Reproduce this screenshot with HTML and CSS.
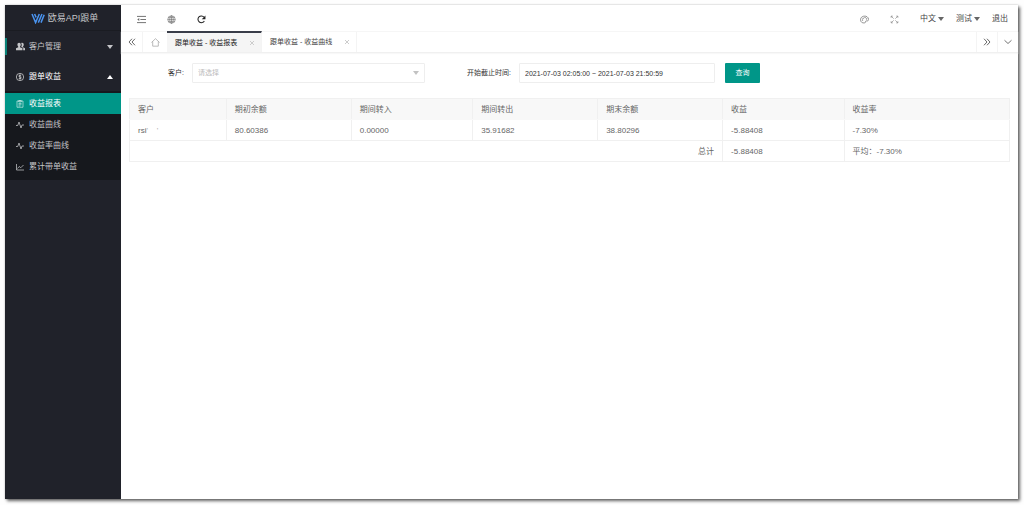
FILE: index.html
```html
<!DOCTYPE html>
<html lang="zh-CN">
<head>
<meta charset="utf-8">
<title>欧易API跟单</title>
<link rel="stylesheet" href="styles.css">
</head>
<body>
<div class="app">
  <aside class="sidebar">
    <div class="brand">
      <svg class="brand-logo" viewBox="0 0 14 11"><path d="M1 1l3.600 8.600L8.300 1M3.600 1l1.500 3.400M7.300 9.600L11 1M10 9.600L13.200 1.800" fill="none" stroke="#4a94f0" stroke-width="1.500"/></svg>
      <span>欧易API跟单</span>
    </div>
    <nav class="menu">
      <a class="menu-item marked" href="#">
        <svg class="icon icon-wide" viewBox="0 0 16 16"><path d="M5.500 1.500c2 0 3 1.500 3 3.500 0 1.500-.6 2.700-1.400 3.300v1.200l4.400 1.500V14.500H0V11l4-1.500V8.300C3.100 7.700 2.500 6.500 2.500 5c0-2 1-3.500 3-3.500z" fill="currentColor"/><path d="M11 1.500c1.800 0 2.800 1.500 2.800 3.500 0 1.400-.6 2.500-1.300 3.200v1.200L16 11v3.500h-3.200V10.300L9.500 9V8c.8-1 1-4-.3-5.800.4-.4 1-.7 1.800-.7z" fill="currentColor"/></svg>
        <span>客户管理</span><i class="caret"></i>
      </a>
      <a class="menu-item open" href="#">
        <svg class="icon" viewBox="0 0 16 16" fill="none" stroke="currentColor" stroke-width="1.200"><circle cx="8" cy="8" r="7.300"/><path d="M10.500 5.700C10 4.800 9 4.500 8 4.500c-1.500 0-2.500.7-2.500 1.700C5.500 8.500 10.600 7.300 10.600 9.800c0 1.100-1.100 1.800-2.600 1.800-1.300 0-2.300-.5-2.700-1.500M8 2.800v10.400"/></svg>
        <span>跟单收益</span><i class="caret up"></i>
      </a>
      <div class="submenu">
        <a class="sub-item active" href="#">
          <svg class="icon" viewBox="0 0 16 16" fill="none" stroke="currentColor" stroke-width="1.100"><path d="M2 2h12v12.500H2zM5.500 1v3h5V1zM5 7h6M5 9.500h6M5 12h4"/></svg>
          <span>收益报表</span></a>
        <a class="sub-item" href="#">
          <svg class="icon" viewBox="0 0 16 16" fill="none" stroke="currentColor" stroke-width="1.500"><path d="M0 9h3.500L6 2l4 12 2-6h4"/></svg>
          <span>收益曲线</span></a>
        <a class="sub-item" href="#">
          <svg class="icon" viewBox="0 0 16 16" fill="none" stroke="currentColor" stroke-width="1.500"><path d="M0 9h3.500L6 2l4 12 2-6h4"/></svg>
          <span>收益率曲线</span></a>
        <a class="sub-item" href="#">
          <svg class="icon" viewBox="0 0 16 16" fill="none" stroke="currentColor" stroke-width="1.500"><path d="M1 2v12h15M3 11l3.500-4 3 2.500L15 4"/></svg>
          <span>累计带单收益</span></a>
      </div>
    </nav>
  </aside>

  <main class="main">
    <header class="topbar">
      <div class="tools">
        <button class="tool" aria-label="折叠菜单"><svg class="icon" viewBox="0 0 16 16" fill="none" stroke="currentColor" stroke-width="1.600"><path d="M0 2.500h16M6 8h10M0 13.500h16"/><path d="M4 5.500v5L.5 8z" fill="currentColor" stroke="none"/></svg></button>
        <button class="tool" aria-label="网站"><svg class="icon" viewBox="0 0 16 16" fill="none" stroke="currentColor" stroke-width="1"><circle cx="8" cy="8" r="6.700"/><ellipse cx="8" cy="8" rx="3.200" ry="6.700"/><path d="M8 1.300v13.400M1.300 8h13.400M2.300 4.700h11.400M2.300 11.300h11.400"/></svg></button>
        <button class="tool dark" aria-label="刷新"><svg class="icon" viewBox="0 0 16 16"><path d="M13 10.500A6 6 0 1 1 12.500 4" fill="none" stroke="currentColor" stroke-width="1.900"/><path d="M15 1v6.500H8.500z" fill="currentColor"/></svg></button>
      </div>
      <div class="account">
        <button class="tool" aria-label="主题"><svg class="icon" viewBox="0 0 16 16" fill="none" stroke="currentColor" stroke-width="1.200"><path d="M3 13C-.5 10 .5 3.500 6 2.200 11 1 15.500 4 15.300 8c-.1 2.200-1.800 2.800-3.300 2.500-1.600-.3-2.300.5-2 1.500.6 2.200-4 3-7 1z"/><circle cx="4.500" cy="9" r=".6"/><circle cx="5.500" cy="5.700" r=".6"/><circle cx="9" cy="4.700" r=".6"/><circle cx="12" cy="7" r=".6"/></svg></button>
        <button class="tool light" aria-label="全屏"><svg class="icon" viewBox="0 0 16 16" fill="none" stroke="currentColor" stroke-width="1.200"><path d="M2 5V2h3M11 2h3v3M14 11v3h-3M5 14H2v-3M2 2l4.500 4.500M14 2L9.500 6.500M14 14L9.500 9.500M2 14l4.500-4.500"/></svg></button>
        <button class="drop">中文<i class="caret"></i></button>
        <button class="drop">测试<i class="caret"></i></button>
        <a class="logout" href="#">退出</a>
      </div>
    </header>

    <div class="tabs">
      <button class="tab-nav first" aria-label="向左"><svg class="icon" viewBox="0 0 16 16" fill="none" stroke="currentColor" stroke-width="1.600"><path d="M8 1.500L2 8l6 6.500M14 1.500L8 8l6 6.500"/></svg></button>
      <button class="tab-nav home" aria-label="首页"><svg class="icon" viewBox="0 0 16 16" fill="none" stroke="currentColor" stroke-width="1.200"><path d="M.8 8L8 1.200 15.200 8M3 6.500V14.500h10V6.500"/></svg></button>
      <div class="tab current"><a href="#">跟单收益 - 收益报表</a><button class="close" aria-label="关闭"><svg viewBox="0 0 6 6"><path d="M1 1l4 4M5 1L1 5" fill="none" stroke="currentColor" stroke-width="1"/></svg></button></div>
      <div class="tab"><a href="#">跟单收益 - 收益曲线</a><button class="close" aria-label="关闭"><svg viewBox="0 0 6 6"><path d="M1 1l4 4M5 1L1 5" fill="none" stroke="currentColor" stroke-width="1"/></svg></button></div>
      <div class="tab-end">
        <button class="tab-nav" aria-label="向右"><svg class="icon" viewBox="0 0 16 16" fill="none" stroke="currentColor" stroke-width="1.600"><path d="M2 1.500L8 8l-6 6.500M8 1.500L14 8l-6 6.500"/></svg></button>
        <button class="tab-nav" aria-label="更多"><svg class="icon" viewBox="0 0 16 16" fill="none" stroke="currentColor" stroke-width="1.500"><path d="M1 4.500l7 6.500 7-6.500"/></svg></button>
      </div>
    </div>

    <section class="content">
      <form class="filters">
        <label class="label-client" for="client">客户:</label>
        <div class="select-wrap">
          <select id="client" class="field"><option>请选择</option></select>
          <i class="caret"></i>
        </div>
        <label class="label-range" for="range">开始截止时间:</label>
        <input id="range" class="field range" type="text" value="2021-07-03 02:05:00 ~ 2021-07-03 21:50:59">
        <button class="query" type="button">查询</button>
      </form>

      <table class="report">
        <colgroup><col class="c-client"><col class="c-wide"><col class="c-mid"><col class="c-wide"><col class="c-wide"><col class="c-mid"><col></colgroup>
        <thead>
          <tr><th>客户</th><th>期初余额</th><th>期间转入</th><th>期间转出</th><th>期末余额</th><th>收益</th><th>收益率</th></tr>
        </thead>
        <tbody>
          <tr><td>rsi<span class="masked">' &nbsp; &nbsp;'</span></td><td>80.60386</td><td>0.00000</td><td>35.91682</td><td>38.80296</td><td>-5.88408</td><td>-7.30%</td></tr>
          <tr><td class="total" colspan="5">总计</td><td>-5.88408</td><td>平均：-7.30%</td></tr>
        </tbody>
      </table>
    </section>
  </main>
</div>
</body>
</html>
```

FILE: styles.css
```css
* { box-sizing: border-box; }

body {
  margin: 0;
  padding: 5px 6px 6px 5px;
  background: #fefefe;
  color: #444;
  font-family: "Liberation Sans", "Noto Sans CJK SC", sans-serif;
  font-size: 8px;
  line-height: 12px;
}

a { color: inherit; text-decoration: none; }

button {
  padding: 0;
  border: 0;
  background: none;
  color: inherit;
  font: inherit;
}

svg { display: block; }

.icon { width: 8px; height: 8px; flex: none; }

.caret {
  width: 0;
  height: 0;
  border: 3px solid transparent;
  border-top: 4px solid currentColor;
  border-bottom: 0;
}

.caret.up {
  border-top: 0;
  border-bottom: 4px solid currentColor;
}

.app {
  display: flex;
  min-height: calc(100vh - 11px);
  background: #fff;
  box-shadow: 2px 2px 3px rgba(0, 0, 0, 0.6), 0 0 2px rgba(0, 0, 0, 0.2);
}

/* Sidebar */

.sidebar {
  flex: none;
  width: 116px;
  background: #20222a;
  color: #c4c5c8;
}

.brand {
  display: flex;
  align-items: center;
  justify-content: center;
  gap: 3px;
  height: 26px;
  padding: 1px 0 0 3px;
  border-bottom: 1px solid #1a1c22;
  font-size: 9px;
}

.brand-logo { width: 14px; height: 11px; }

.menu-item {
  display: flex;
  align-items: center;
  gap: 5px;
  height: 30px;
  padding: 1px 8px 0 11px;
}

.menu-item .caret { margin-left: auto; }

.marked {
  background: linear-gradient(#0a8177, #0a8177) left center / 2px 17px no-repeat;
}

.icon-wide { width: 9px; height: 9px; margin-right: -1px; }

.open { color: #fff; }

.submenu {
  padding: 2px 0 3px;
  background: #16181d;
}

.sub-item {
  display: flex;
  align-items: center;
  gap: 5px;
  height: 21px;
  padding: 0 11px;
}

.sub-item.active { background: #009688; color: #fff; }

/* Top bar and tabs */

.main { flex: 1; min-width: 0; }

.topbar {
  display: flex;
  align-items: center;
  justify-content: space-between;
  height: 26px;
  padding: 2px 10px 0 16px;
}

.tools { display: flex; gap: 21px; }

.tool { color: #666; }

.tool.light { color: #888; }

.tools .icon { width: 9px; height: 9px; }

.tool.dark { color: #222; }

.account { display: flex; align-items: center; gap: 12px; }

.account .tool { margin-right: 9px; }

.account .icon { width: 9px; height: 9px; }

.drop { display: flex; align-items: center; gap: 2px; }

.drop .caret { color: #666; }

.tabs {
  display: flex;
  height: 22px;
  border-top: 1px solid #f6f6f6;
  border-bottom: 1px solid #f0f0f0;
  box-shadow: 0 1px 1px #f8f8f8;
}

.tab-nav {
  display: flex;
  align-items: center;
  justify-content: center;
  width: 21px;
  border-left: 1px solid #f4f4f4;
  color: #444;
}

.tab-nav.first { border-left: 0; }

.tab-nav.home { width: 25px; color: #999; }

.home .icon { width: 9px; height: 9px; }

.tab {
  display: flex;
  align-items: center;
  justify-content: space-between;
  width: 95px;
  padding: 0 6px 0 8px;
  border-right: 1px solid #f4f4f4;
  font-size: 7px;
}

.tab.current {
  margin-top: -1px;
  border-top: 2px solid #393d49;
  background: #f5f5f5;
  color: #222;
}

.close { color: #ccc; }

.close svg { width: 6px; height: 6px; }

.tab-end { display: flex; margin-left: auto; }

/* Filters */

.content { padding: 10px 8px; }

.filters {
  display: flex;
  align-items: center;
  margin-bottom: 15px;
  font-size: 7px;
  color: #333;
}

.label-client { width: 63px; padding-right: 8px; text-align: right; }

.label-range { width: 94px; padding-right: 8px; text-align: right; }

.select-wrap { position: relative; width: 233px; }

.select-wrap .caret {
  position: absolute;
  top: 8px;
  right: 6px;
  color: #c2c2c2;
  pointer-events: none;
}

.field {
  width: 100%;
  height: 20px;
  margin: 0;
  padding: 0 5px;
  border: 1px solid #eee;
  border-radius: 1px;
  background: #fff;
  color: #333;
  font: inherit;
}

select.field { appearance: none; color: #bbb; }

.range { width: 196px; }

.query {
  width: 35px;
  height: 20px;
  margin-left: 10px;
  border-radius: 1px;
  background: #009688;
  color: #fff;
}

/* Report */

.report {
  width: 100%;
  border-collapse: collapse;
  table-layout: fixed;
  color: #666;
}

.c-client { width: 11%; }
.c-wide { width: 14.2%; }
.c-mid { width: 13.8%; }

.report th,
.report td {
  height: 21px;
  padding: 1px 8px 0;
  border: 1px solid #f0f0f0;
  font-weight: 400;
  text-align: left;
}

.report th { background: #f8f8f8; border-bottom-color: #f8f8f8; }

.report .total { text-align: right; }

.masked { color: #aaa; }
```
